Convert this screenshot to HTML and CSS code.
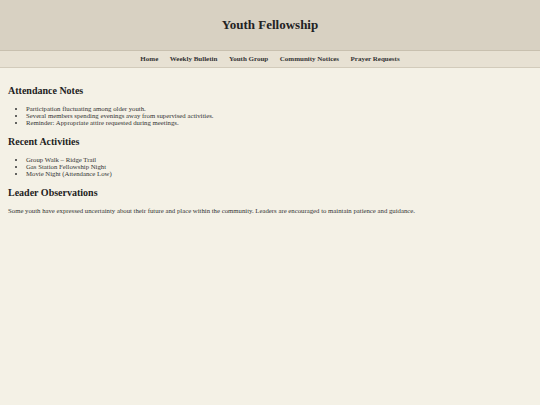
FILE: index.html
```html
<!DOCTYPE html>
<html lang="en">
<head>
  <meta charset="UTF-8">
  <meta name="viewport" content="width=device-width, initial-scale=1.0">
  <title>Youth Fellowship</title>
  <link rel="stylesheet" href="styles.css">
</head>
<body>
  <header class="site-header">
    <h1>Youth Fellowship</h1>
  </header>

  <nav class="site-nav">
    <a href="#">Home</a>
    <a href="#">Weekly Bulletin</a>
    <a href="#">Youth Group</a>
    <a href="#">Community Notices</a>
    <a href="#">Prayer Requests</a>
  </nav>

  <main class="content">
    <!-- Attendance -->
    <h2>Attendance Notes</h2>
    <ul>
      <li>Participation fluctuating among older youth.</li>
      <li>Several members spending evenings away from supervised activities.</li>
      <li>Reminder: Appropriate attire requested during meetings.</li>
    </ul>

    <!-- Activities -->
    <h2>Recent Activities</h2>
    <ul>
      <li>Group Walk – Ridge Trail</li>
      <li>Gas Station Fellowship Night</li>
      <li>Movie Night (Attendance Low)</li>
    </ul>

    <!-- Observations -->
    <h2>Leader Observations</h2>
    <p>Some youth have expressed uncertainty about their future and place within the community. Leaders are encouraged to maintain patience and guidance.</p>
  </main>
</body>
</html>
```

FILE: styles.css
```css
body {
  background-color: #f4f1e6;
  color: #333;
  font-family: 'Liberation Serif', 'Times New Roman', serif;
  font-size: 6.75px;
  margin: 0;
  padding: 0;
}
.site-header {
  background-color: #d8d1c2;
  border-bottom: 1px solid #c8c0af;
  height: 50px;
  display: flex;
  align-items: center;
  justify-content: center;
}
.site-header h1 {
  margin: 0;
  font-size: 13px;
  color: #222;
}
.site-nav {
  background-color: #e7e1d3;
  border-bottom: 1px solid #d2cbbb;
  height: 16px;
  display: flex;
  align-items: center;
  justify-content: center;
  gap: 11.5px;
}
.site-nav a {
  color: #333;
  font-size: 7px;
  font-weight: bold;
  text-decoration: none;
}
.content {
  padding: 6.5px 8px;
}
.content h2 {
  font-size: 10px;
  color: #222;
  margin: 10.8px 0 8.3px;
}
.content ul {
  padding-left: 18px;
  margin: 6.75px 0;
}
.content p {
  margin: 6.75px 0;
}
```
